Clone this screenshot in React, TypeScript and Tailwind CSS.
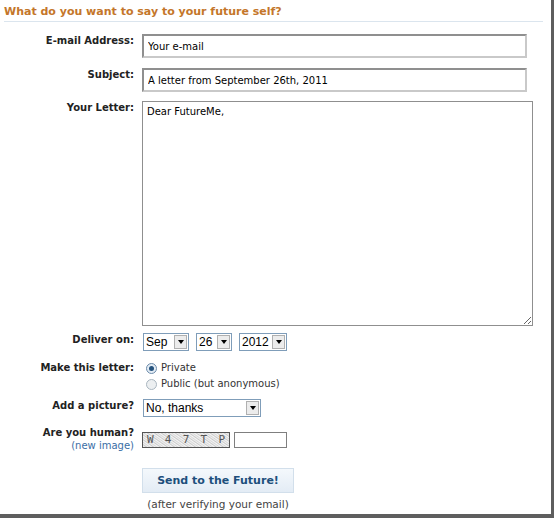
import { useState } from 'react';

const MONTHS = ['Jan', 'Feb', 'Mar', 'Apr', 'May', 'Jun', 'Jul', 'Aug', 'Sep', 'Oct', 'Nov', 'Dec'];
const DAYS = Array.from({ length: 31 }, (_, i) => String(i + 1));
const YEARS = ['2012', '2013', '2014', '2015', '2016', '2017', '2018', '2019', '2020', '2021'];

function ClassicSelect({
  value,
  options,
  onChange,
  width,
}: {
  value: string;
  options: string[];
  onChange: (v: string) => void;
  width: string;
}) {
  return (
    <div className={`relative h-[18px] ${width}`}>
      <select
        value={value}
        onChange={(e) => onChange(e.target.value)}
        className="h-full w-full appearance-none border border-[#7f9db9] bg-white pl-[2px] text-[12px] leading-[16px] text-black outline-none [font-family:'Liberation_Sans',Arial,sans-serif]"
      >
        {options.map((o) => (
          <option key={o}>{o}</option>
        ))}
      </select>
      {/* classic dropdown button */}
      <span className="pointer-events-none absolute top-[2px] right-[2px] bottom-[2px] flex w-[13px] items-center justify-center border border-[#b0b0b0] bg-[#ececec]">
        <span className="h-0 w-0 border-x-[3px] border-t-[4px] border-x-transparent border-t-black" />
      </span>
    </div>
  );
}

function Radio({ checked, label, onClick }: { checked: boolean; label: string; onClick: () => void }) {
  return (
    <button type="button" onClick={onClick} className="flex h-[16px] items-center gap-[4px] text-left">
      <span
        className={`flex h-[11px] w-[11px] items-center justify-center rounded-full border ${
          checked ? 'border-[#6d8cab] bg-[#e3ecf5]' : 'border-[#aab6c0] bg-[#eceff1]'
        }`}
      >
        {checked && <span className="h-[5px] w-[5px] rounded-full bg-[#24527d]" />}
      </span>
      <span className="text-[#333]">{label}</span>
    </button>
  );
}

function Label({ children }: { children: React.ReactNode }) {
  return <div className="pt-px text-right font-bold text-[#222]">{children}</div>;
}

export default function App() {
  const [email, setEmail] = useState('Your e-mail');
  const [subject, setSubject] = useState('A letter from September 26th, 2011');
  const [letter, setLetter] = useState('Dear FutureMe,');
  const [month, setMonth] = useState('Sep');
  const [day, setDay] = useState('26');
  const [year, setYear] = useState('2012');
  const [isPrivate, setIsPrivate] = useState(true);
  const [picture, setPicture] = useState('No, thanks');
  const [captcha, setCaptcha] = useState('');

  return (
    <div className="h-[519px] w-[554px] bg-white">
      <div className="h-[518px] w-[554px] border-r-[3px] border-b-[4px] border-[#5e5e5e] bg-white text-[10px] leading-[12px] text-[#333] [font-family:'DejaVu_Sans',Verdana,sans-serif]">
        {/* Header */}
        <div className="px-[4px] pt-[6px]">
          <h1 className="text-[11px] leading-[12px] font-bold text-[#c4762a]">
            What do you want to say to your future self?
          </h1>
          <div className="mt-[3px] mr-[4px] h-px bg-[#dbe5ee]" />
        </div>

        {/* Form */}
        <div className="mt-[12px] grid grid-cols-[134px_1fr] gap-x-[8px]">
          <Label>E-mail Address:</Label>
          <input
            value={email}
            onChange={(e) => setEmail(e.target.value)}
            className="h-[24px] w-[385px] border-2 border-[#8f8f8f] border-r-[#c9c9c9] border-b-[#c9c9c9] px-[4px] text-[10px] text-black outline-none"
          />

          <div className="col-span-2 h-[10px]" />
          <Label>Subject:</Label>
          <input
            value={subject}
            onChange={(e) => setSubject(e.target.value)}
            className="h-[24px] w-[385px] border-2 border-[#8f8f8f] border-r-[#c9c9c9] border-b-[#c9c9c9] px-[4px] text-[10px] text-black outline-none"
          />

          <div className="col-span-2 h-[9px]" />
          <Label>Your Letter:</Label>
          <textarea
            value={letter}
            onChange={(e) => setLetter(e.target.value)}
            className="h-[225px] w-[391px] resize border border-[#8f8f8f] px-[4px] py-[4px] text-[10px] leading-[12px] text-black outline-none"
          />

          <div className="col-span-2 h-[7px]" />
          <Label>Deliver on:</Label>
          <div className="flex items-center gap-[7px] pl-px">
            <ClassicSelect value={month} options={MONTHS} onChange={setMonth} width="w-[46px]" />
            <ClassicSelect value={day} options={DAYS} onChange={setDay} width="w-[36px]" />
            <ClassicSelect value={year} options={YEARS} onChange={setYear} width="w-[48px]" />
          </div>

          <div className="col-span-2 h-[10px]" />
          <Label>Make this letter:</Label>
          <div className="-mt-[1px] flex flex-col pl-[4px]">
            <Radio checked={isPrivate} label="Private" onClick={() => setIsPrivate(true)} />
            <Radio checked={!isPrivate} label="Public (but anonymous)" onClick={() => setIsPrivate(false)} />
          </div>

          <div className="col-span-2 h-[7px]" />
          <Label>Add a picture?</Label>
          <div className="pl-px">
            <ClassicSelect
              value={picture}
              options={['No, thanks', 'Upload a picture']}
              onChange={setPicture}
              width="w-[118px]"
            />
          </div>

          <div className="col-span-2 h-[9px]" />
          <div className="flex flex-col items-end">
            <Label>Are you human?</Label>
            <a href="#" className="mt-px text-[#3a6ea5]">
              (new image)
            </a>
          </div>
          <div className="flex items-start gap-[4px] pt-[6px]">
            {/* captcha image */}
            <div className="flex h-[16px] w-[88px] items-center justify-between border border-[#555] bg-[repeating-linear-gradient(35deg,#dcdcdc_0px,#f6f6f6_1px,#cacaca_2px,#f0f0f0_3px,#d6d6d6_4px)] px-[4px] text-[11px] text-[#555] [font-family:'DejaVu_Sans_Mono',monospace]">
              <span>W</span>
              <span>4</span>
              <span>7</span>
              <span>T</span>
              <span>P</span>
            </div>
            <input
              value={captcha}
              onChange={(e) => setCaptcha(e.target.value)}
              className="h-[16px] w-[53px] border border-[#7f7f7f] px-[2px] text-[10px] outline-none"
            />
          </div>

          <div className="col-span-2 h-[16px]" />
          <div />
          <div className="flex w-[152px] flex-col items-center">
            <button
              type="button"
              className="h-[25px] w-[152px] border border-[#d2dfeb] bg-[linear-gradient(#f4f8fc,#e3ecf5)] text-[11px] font-bold text-[#1d4f7c]"
            >
              Send to the Future!
            </button>
            <p className="mt-[5px] text-[10.5px] text-[#444]">(after verifying your email)</p>
          </div>
        </div>
      </div>
    </div>
  );
}
